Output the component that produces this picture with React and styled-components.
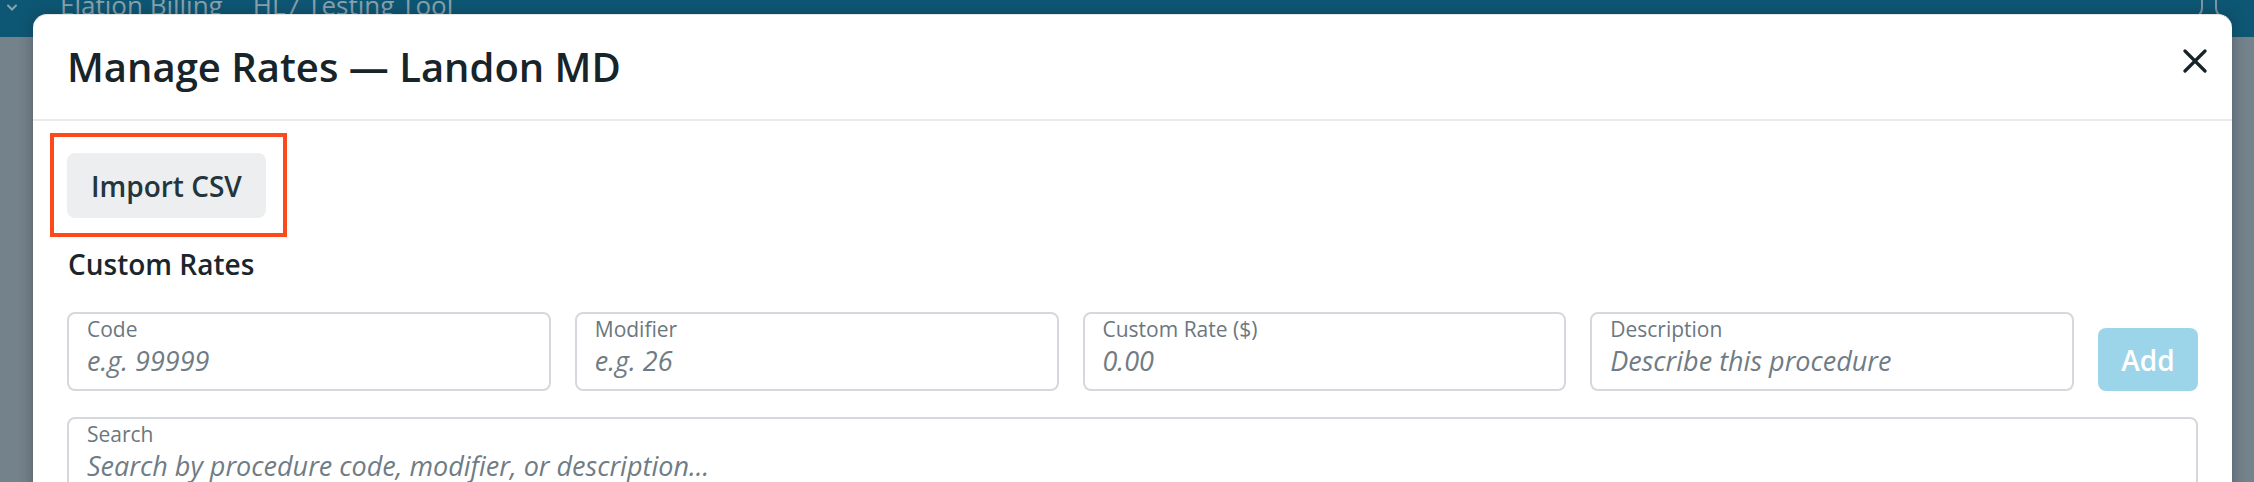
import React from 'react'
import styled, { createGlobalStyle } from 'styled-components'

const Global = createGlobalStyle`
  html, body {
    margin: 0;
    padding: 0;
    width: 2254px;
    height: 482px;
    overflow: hidden;
    background: #77858e;
    font-family: 'Open Sans', 'Noto Sans', sans-serif;
  }
`

const Page = styled.div`
  position: relative;
  width: 2254px;
  height: 482px;
  overflow: hidden;
  background: #74828b;
`

const TopBar = styled.header`
  display: flex;
  align-items: flex-start;
  height: 37px;
  padding: 0 0 0 6px;
  background: #0e5774;
  color: #8aa2ae;
  font-size: 26px;
`

const Chevron = styled.span`
  display: flex;
  margin-top: 4px;
  width: 12px;
`

const NavLinks = styled.nav`
  display: flex;
  gap: 30px;
  margin: -8px 0 0 42px;
  line-height: 26px;
`

const BarIcon = styled.span`
  display: flex;
  margin-left: auto;
  margin-right: 34px;
`

const Backdrop = styled.div`
  position: absolute;
  inset: 0;
  display: flex;
  align-items: flex-start;
`

const Modal = styled.section`
  margin: 14px 0 0 33px;
  width: 2199px;
  height: 520px;
  background: #fff;
  border-radius: 14px 14px 0 0;
  box-shadow: 0 0 14px rgba(20, 30, 40, 0.35);
  border-top: 1px solid #e4e7ea;
`

const Header = styled.div`
  display: flex;
  align-items: center;
  justify-content: space-between;
  padding: 23px 25px 24px 34px;
  border-bottom: 2px solid #e9ebed;
`

const Title = styled.h2`
  margin: 0;
  font-size: 40px;
  line-height: 57px;
  font-weight: 600;
  color: #172429;
`

const Close = styled.button`
  display: flex;
  align-items: center;
  justify-content: center;
  width: 24px;
  height: 24px;
  padding: 0;
  border: none;
  background: none;
  margin-bottom: 12px;
  cursor: pointer;
`

const Body = styled.div`
  padding: 12px 34px 0 34px;
`

const Highlight = styled.div`
  display: inline-flex;
  margin-left: -17px;
  padding: 16px 17px 15px 13px;
  border: 4px solid #fd4a1d;
`

const GrayButton = styled.button`
  height: 65px;
  padding: 0 24px;
  border: none;
  border-radius: 8px;
  background: #eceef0;
  color: #25353c;
  font-family: inherit;
  font-size: 28px;
  font-weight: 600;
`

const SectionTitle = styled.h3`
  margin: 9px 0 29px 1px;
  font-size: 28px;
  line-height: 37px;
  font-weight: 600;
  color: #1a262c;
`

const Row = styled.div`
  display: flex;
  align-items: flex-end;
  gap: 24px;
`

const Field = styled.label`
  display: flex;
  flex-direction: column;
  flex: ${p => (p.$wide ? '1 1 auto' : '1 1 0')};
  padding: 1px 18px 10px 18px;
  border: 2px solid #d5d9dd;
  border-radius: 8px;
  background: #fff;
`

const FieldLabel = styled.span`
  font-size: 21px;
  line-height: 28px;
  color: #6b777f;
`

const Input = styled.input`
  padding: 0;
  border: none;
  outline: none;
  font-family: inherit;
  font-size: 27px;
  line-height: 36px;
  height: 36px;
  color: #25353c;
  background: transparent;

  &::placeholder {
    font-style: italic;
    color: #6f7c85;
  }
`

const AddButton = styled.button`
  flex: 0 0 100px;
  height: 63px;
  border: none;
  border-radius: 8px;
  background: #9cd4ea;
  color: #fff;
  font-family: inherit;
  font-size: 28px;
  font-weight: 600;
`

const SearchRow = styled.div`
  display: flex;
  margin-top: 26px;
`

const fields = [
  { label: 'Code', placeholder: 'e.g. 99999' },
  { label: 'Modifier', placeholder: 'e.g. 26' },
  { label: 'Custom Rate ($)', placeholder: '0.00' },
  { label: 'Description', placeholder: 'Describe this procedure' },
]

export default function App() {
  return (
    <>
      <Global />
      <Page>
        <TopBar>
          <Chevron>
            <svg width="12" height="8" viewBox="0 0 12 8">
              <path d="M2 1.5 L6 5.5 L10 1.5" fill="none" stroke="#8aa2ae" strokeWidth="2" strokeLinecap="round" />
            </svg>
          </Chevron>
          <NavLinks>
            <span>Elation Billing</span>
            <span>HL7 Testing Tool</span>
          </NavLinks>
          <BarIcon>
            <svg width="22" height="16" viewBox="0 0 22 16">
              <path d="M4 -4 V8 Q4 12 1 15 M18 -4 V8 Q18 12 21 15" fill="none" stroke="#7f98a5" strokeWidth="2" />
            </svg>
          </BarIcon>
        </TopBar>
        <Backdrop>
          <Modal>
            <Header>
              <Title>Manage Rates — Landon MD</Title>
              <Close aria-label="Close">
                <svg width="24" height="24" viewBox="0 0 24 24">
                  <path d="M2 2 L22 22 M22 2 L2 22" stroke="#16242a" strokeWidth="3.2" strokeLinecap="round" />
                </svg>
              </Close>
            </Header>
            <Body>
              <Highlight>
                <GrayButton>Import CSV</GrayButton>
              </Highlight>
              <SectionTitle>Custom Rates</SectionTitle>
              <Row>
                {fields.map(f => (
                  <Field key={f.label}>
                    <FieldLabel>{f.label}</FieldLabel>
                    <Input placeholder={f.placeholder} />
                  </Field>
                ))}
                <AddButton disabled>Add</AddButton>
              </Row>
              <SearchRow>
                <Field $wide>
                  <FieldLabel>Search</FieldLabel>
                  <Input placeholder="Search by procedure code, modifier, or description..." />
                </Field>
              </SearchRow>
            </Body>
          </Modal>
        </Backdrop>
      </Page>
    </>
  )
}
